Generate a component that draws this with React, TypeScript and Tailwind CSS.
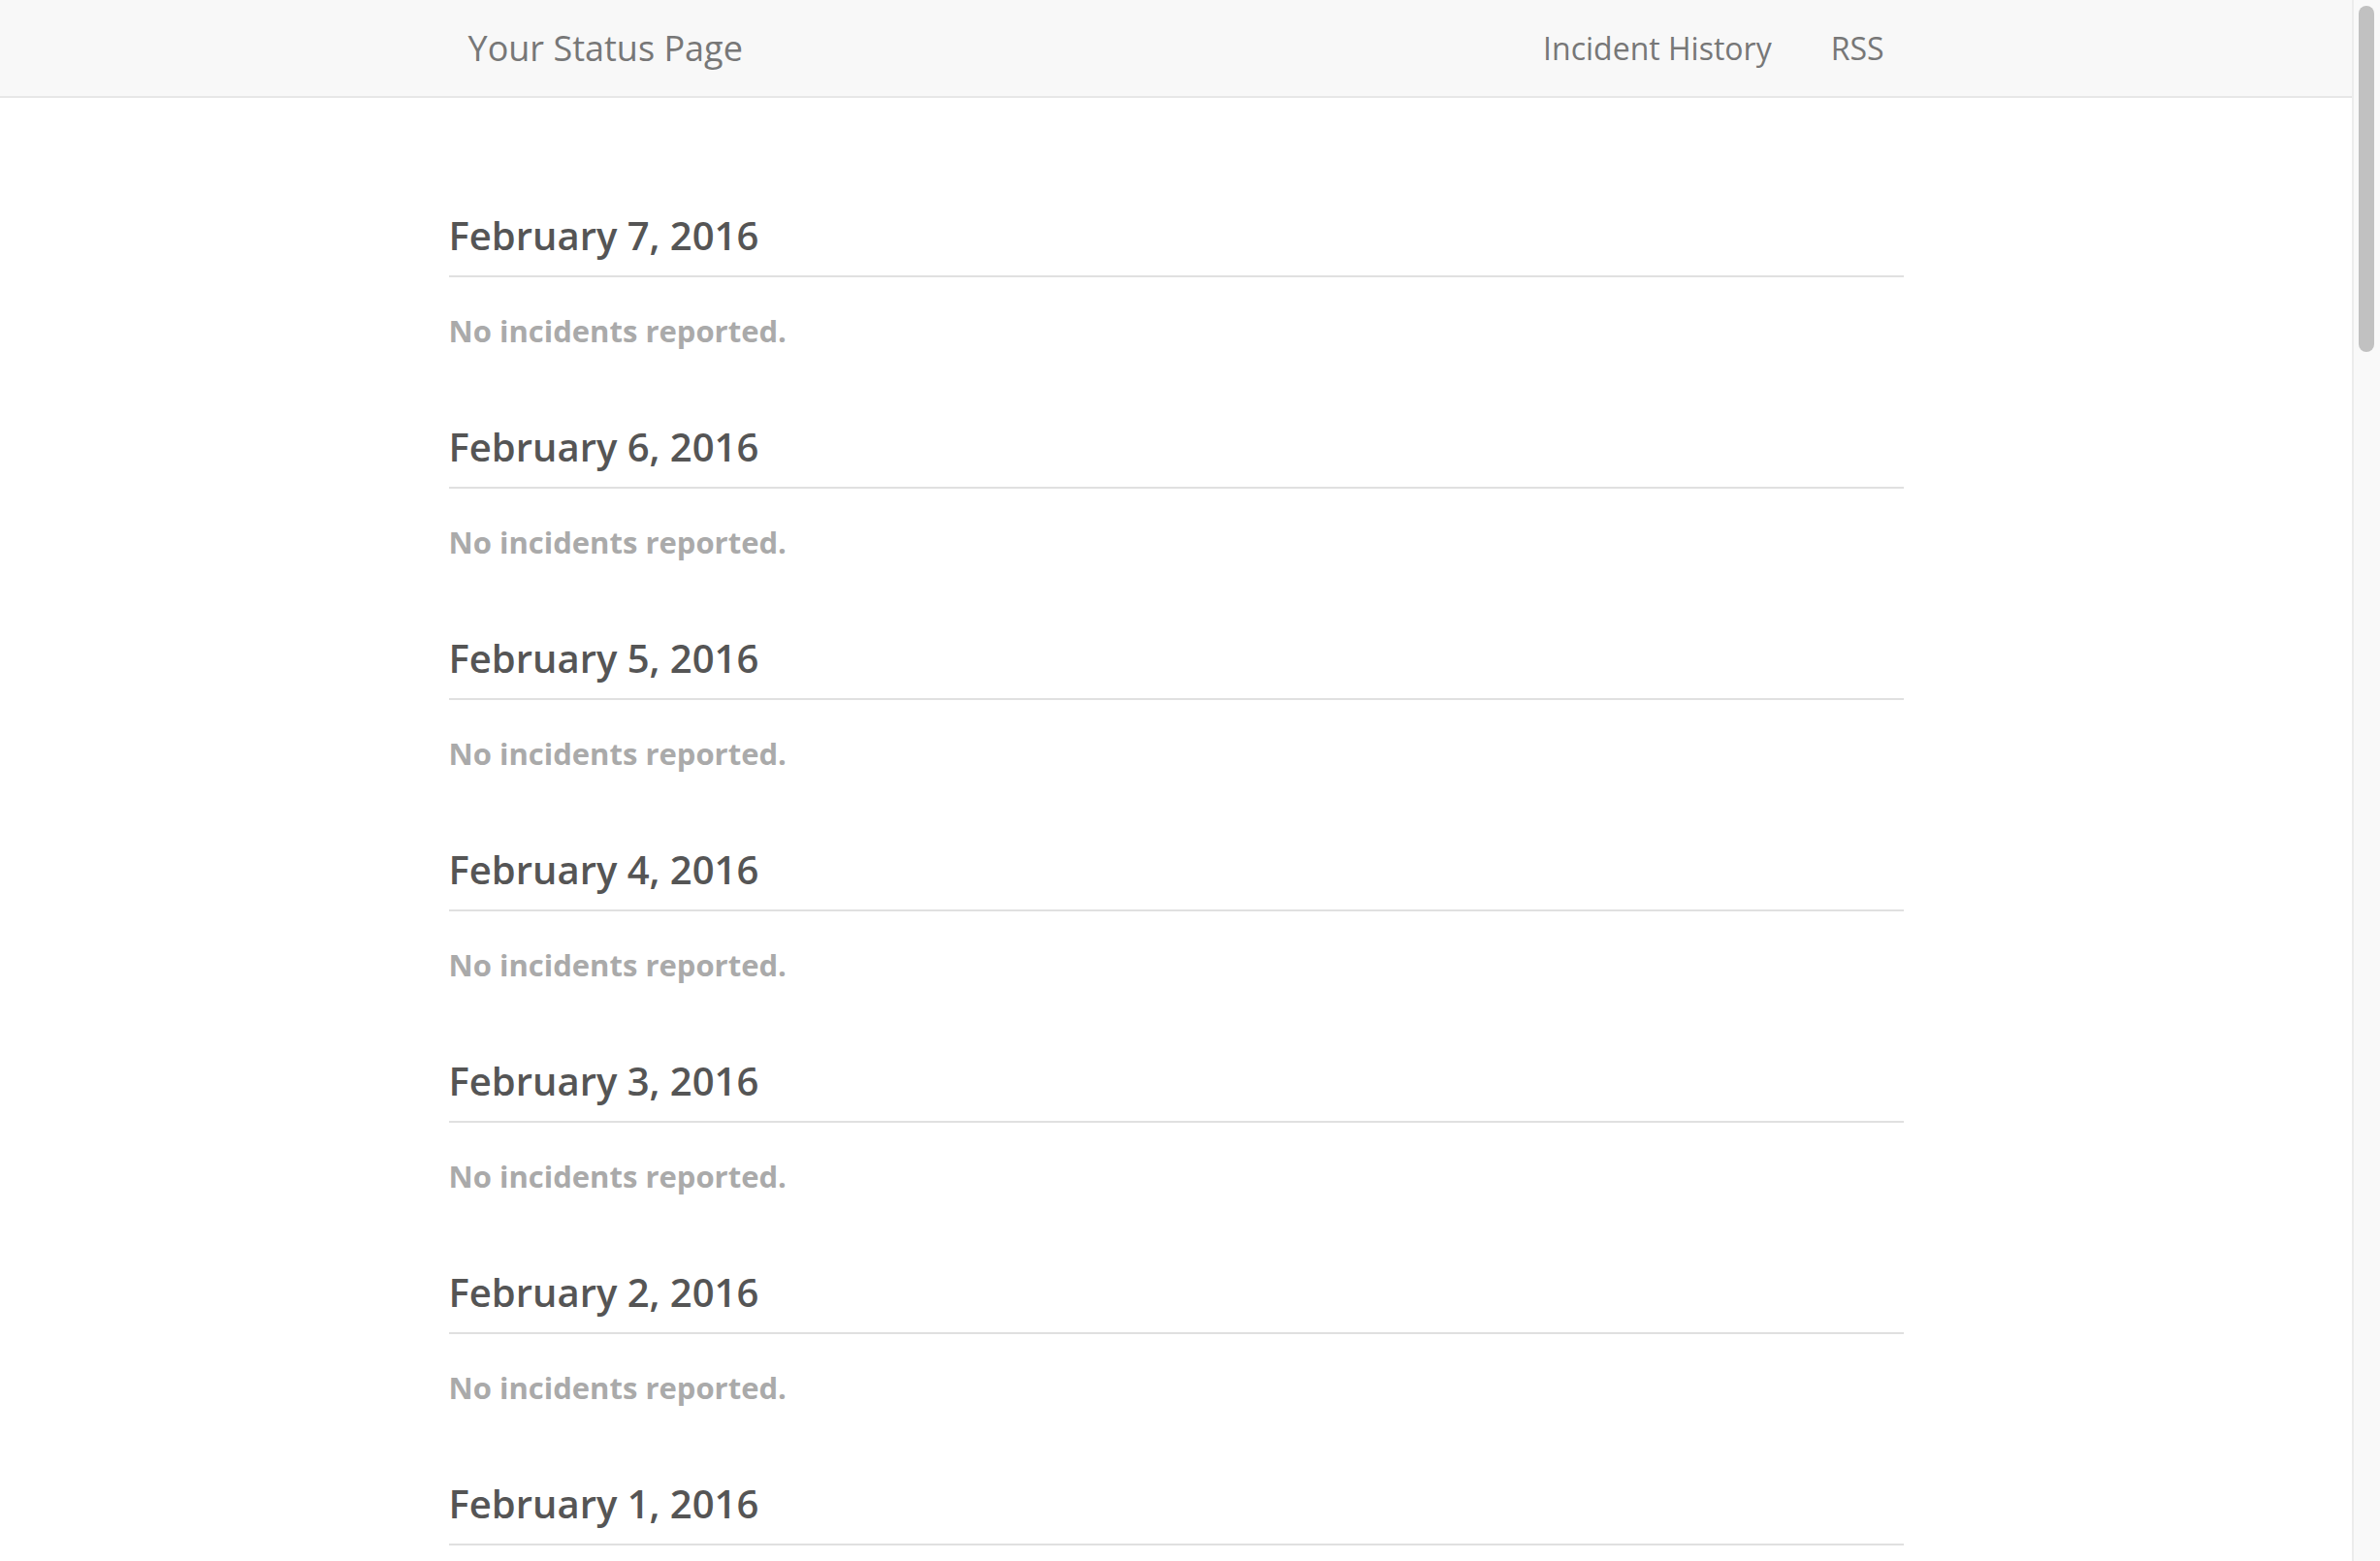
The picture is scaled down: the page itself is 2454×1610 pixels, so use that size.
import React from "react";

const days = [
  "February 7, 2016",
  "February 6, 2016",
  "February 5, 2016",
  "February 4, 2016",
  "February 3, 2016",
  "February 2, 2016",
  "February 1, 2016",
  "January 31, 2016",
];

function Header() {
  return (
    <div className="h-[101px] shrink-0 border-b-2 border-[#e7e7e7] bg-[#f8f8f8]">
      <div className="mx-auto flex h-full w-[1500px] items-center justify-between px-[20px] text-[#777]">
        <span className="text-[36px]">Your Status Page</span>
        <div className="flex items-center gap-[61px] text-[32px]">
          <a href="#">Incident History</a>
          <a href="#">RSS</a>
        </div>
      </div>
    </div>
  );
}

function Day({ date }: { date: string }) {
  return (
    <div className="mb-[75px]">
      <h3 className="border-b-2 border-[#e0e0e0] pb-[19px] text-[40px] font-semibold leading-[44px] text-[#555]">
        {date}
      </h3>
      <p className="mt-[32px] text-[31px] font-bold leading-[46px] text-[#aaa]">
        No incidents reported.
      </p>
    </div>
  );
}

export default function App() {
  return (
    <div
      className="flex h-[1610px] overflow-hidden bg-white"
      style={{ fontFamily: '"Open Sans", sans-serif' }}
    >
      <div className="flex min-w-0 flex-1 flex-col">
        <Header />
        <div className="mx-auto w-[1500px] pt-[120px]">
          {days.map((d) => (
            <Day key={d} date={d} />
          ))}
        </div>
      </div>
      {/* scrollbar */}
      <div className="w-[29px] shrink-0 border-l-2 border-[#ececec] bg-[#f9f9f9] pl-[5px] pt-[6px]">
        <div className="h-[357px] w-[16px] rounded-full bg-[#c1c1c1]" />
      </div>
    </div>
  );
}
